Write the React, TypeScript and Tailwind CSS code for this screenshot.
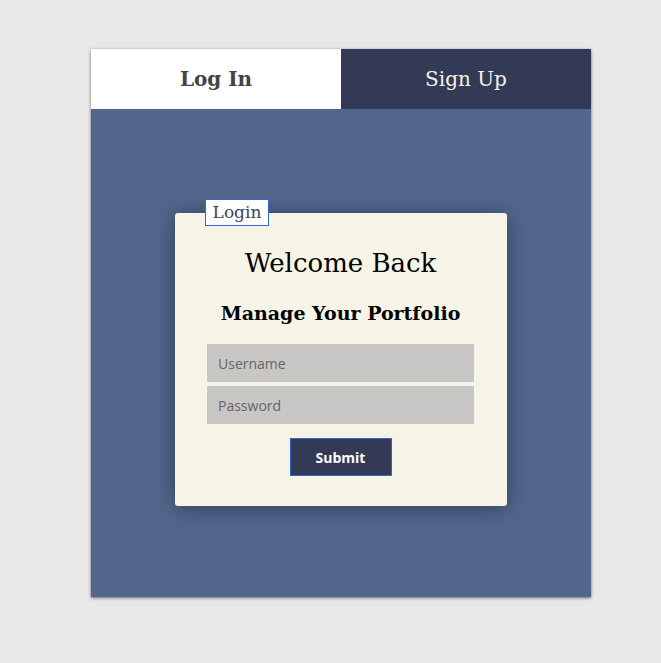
import { useState } from 'react'

const serif = { fontFamily: '"DejaVu Serif", "Liberation Serif", serif' }
const sans = { fontFamily: '"Open Sans", "DejaVu Sans", sans-serif' }

const App = () => {
    const [tab, setTab] = useState<'login' | 'signup'>('login')

    return (
        <div className="min-h-[663px] bg-[#e8e8e8] pt-[49px] pl-[91px]">
            <div className="w-[500px] shadow-[0_1px_3px_rgba(0,0,0,0.55)]">
                <div className="flex h-[60px]" style={serif}>
                    <button
                        onClick={() => setTab('login')}
                        className={`w-[250px] text-[20px] ${tab === 'login' ? 'bg-white text-[#444] font-bold' : 'bg-[#333a56] text-[#f5f3e5]'}`}
                    >
                        Log In
                    </button>
                    <button
                        onClick={() => setTab('signup')}
                        className={`w-[250px] text-[20px] ${tab === 'signup' ? 'bg-white text-[#444] font-bold' : 'bg-[#333a56] text-[#f5f3e5]'}`}
                    >
                        Sign Up
                    </button>
                </div>

                <div className="bg-[#52668d] h-[488px] pt-[104px] pl-[84px]">
                    <div className="relative w-[332px] h-[293px] bg-[#f6f4e6] rounded-[3px] shadow-[0_2px_22px_rgba(0,0,0,0.4)] pl-[32px] pr-[33px] pt-[34px] flex flex-col items-center">
                        <div
                            className="absolute left-[30px] -top-[14px] w-[64px] h-[27px] bg-white border border-[#3366cc] text-[#3b3f66] text-[17px] flex items-center justify-center"
                            style={serif}
                        >
                            Login
                        </div>
                        <h1 className="text-[26px] leading-[32px] text-black" style={serif}>Welcome Back</h1>
                        <h2 className="mt-[21px] text-[19px] leading-[26px] font-bold text-black" style={serif}>Manage Your Portfolio</h2>
                        <form className="mt-[18px] w-[267px] flex flex-col items-center" onSubmit={(e) => e.preventDefault()}>
                            <input
                                type="text"
                                placeholder="Username"
                                className="w-full h-[38px] bg-[#c8c7c5] px-[11px] text-[14px] text-[#333] placeholder:text-[#666] outline-none"
                                style={sans}
                            />
                            <input
                                type="password"
                                placeholder="Password"
                                className="mt-[4px] w-full h-[38px] bg-[#c8c7c5] px-[11px] text-[14px] text-[#333] placeholder:text-[#666] outline-none"
                                style={sans}
                            />
                            <button
                                type="submit"
                                className="mt-[14px] w-[102px] h-[38px] bg-[#333a56] border border-[#3366cc] text-white text-[14px] font-bold"
                                style={sans}
                            >
                                Submit
                            </button>
                        </form>
                    </div>
                </div>
            </div>
        </div>
    )
}

export default App
